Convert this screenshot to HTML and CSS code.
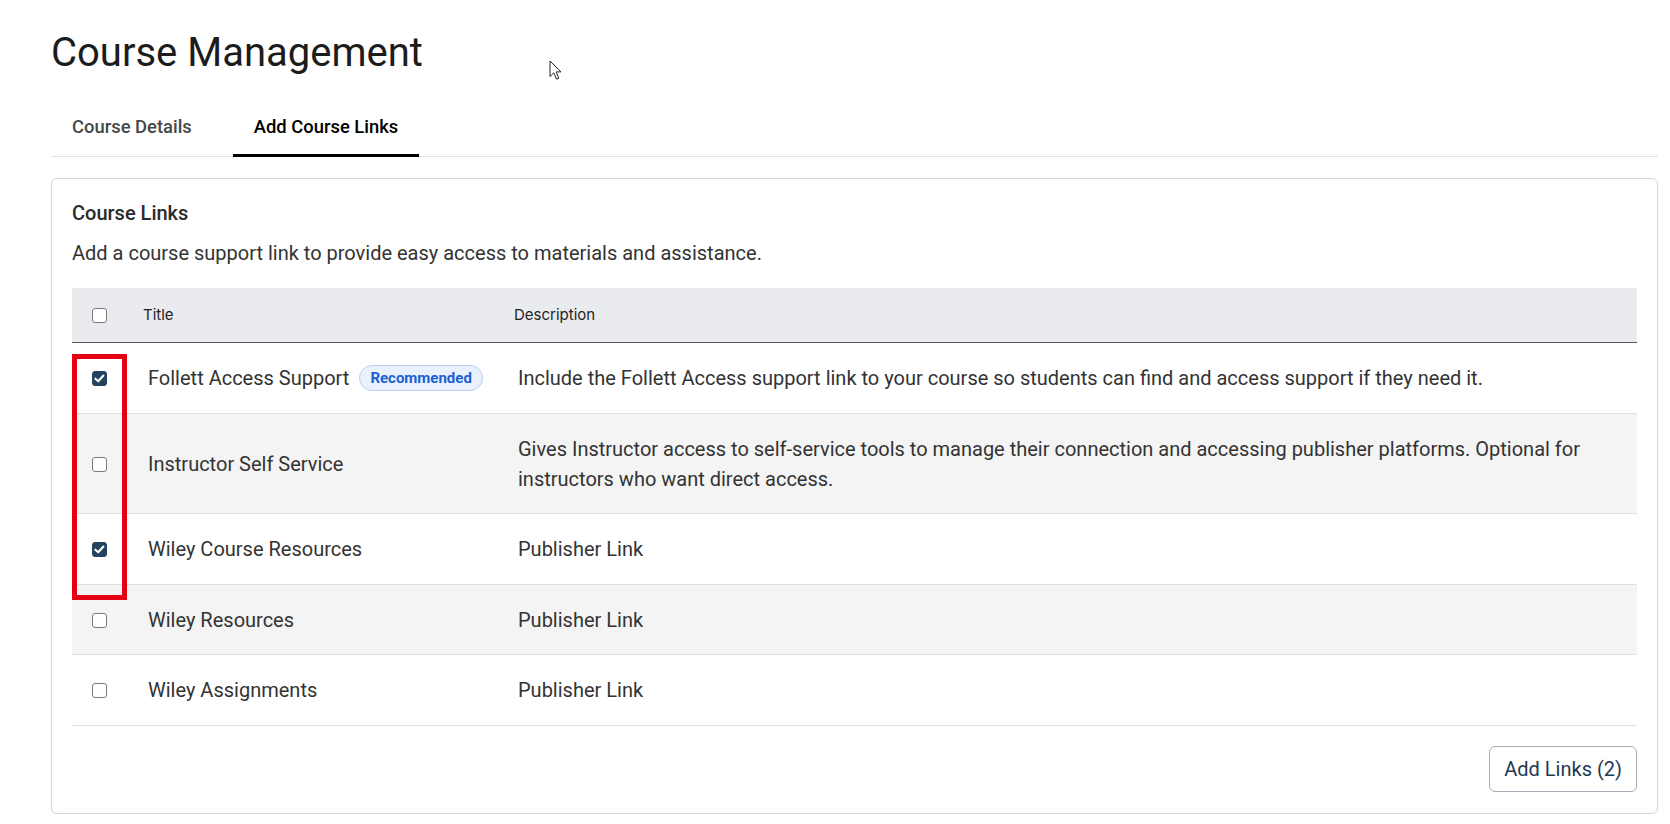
FILE: index.html
```html
<!DOCTYPE html>
<html lang="en">
<head>
<meta charset="utf-8">
<title>Course Management</title>
<link rel="stylesheet" href="styles.css">
</head>
<body>
<div class="page">
  <h1 class="page-title">Course Management</h1>
  <nav class="tabs">
    <div class="tab">Course Details</div>
    <div class="tab active">Add Course Links</div>
  </nav>
  <section class="card">
    <h2 class="card-title">Course Links</h2>
    <p class="card-desc">Add a course support link to provide easy access to materials and assistance.</p>
    <div class="table-wrap">
      <table class="links">
        <thead>
          <tr>
            <th class="col-check"><span class="cb"></span></th>
            <th class="col-title">Title</th>
            <th class="col-desc">Description</th>
          </tr>
        </thead>
        <tbody>
          <tr>
            <td class="col-check"><span class="cb checked"><svg viewBox="0 0 16 16" width="15" height="15"><path d="M3.6 8.2 L6.6 11 L12.2 4.8" fill="none" stroke="#fff" stroke-width="2.2" stroke-linecap="round" stroke-linejoin="round"/></svg></span></td>
            <td class="title-cell">Follett Access Support <span class="badge">Recommended</span></td>
            <td>Include the Follett Access support link to your course so students can find and access support if they need it.</td>
          </tr>
          <tr class="alt">
            <td class="col-check"><span class="cb"></span></td>
            <td class="title-cell">Instructor Self Service</td>
            <td>Gives Instructor access to self-service tools to manage their connection and accessing publisher platforms. Optional for instructors who want direct access.</td>
          </tr>
          <tr>
            <td class="col-check"><span class="cb checked"><svg viewBox="0 0 16 16" width="15" height="15"><path d="M3.6 8.2 L6.6 11 L12.2 4.8" fill="none" stroke="#fff" stroke-width="2.2" stroke-linecap="round" stroke-linejoin="round"/></svg></span></td>
            <td class="title-cell">Wiley Course Resources</td>
            <td>Publisher Link</td>
          </tr>
          <tr class="alt">
            <td class="col-check"><span class="cb"></span></td>
            <td class="title-cell">Wiley Resources</td>
            <td>Publisher Link</td>
          </tr>
          <tr>
            <td class="col-check"><span class="cb"></span></td>
            <td class="title-cell">Wiley Assignments</td>
            <td>Publisher Link</td>
          </tr>
        </tbody>
      </table>
      <div class="annotation"></div>
    </div>
    <div class="actions">
      <button class="btn" type="button">Add Links (2)</button>
    </div>
  </section>
  <svg class="cursor" viewBox="0 0 13 21" width="13" height="21"><path d="M1 1 L1 16.5 L4.8 12.8 L7.6 19.2 L9.8 18.2 L7.1 11.9 L12 11.9 Z" fill="#fff" stroke="#222" stroke-width="1" stroke-linejoin="round"/></svg>
</div>
</body>
</html>
```
FILE: styles.css
```css
* { box-sizing: border-box; }

body {
  margin: 0;
  background: #fff;
  font-family: Roboto, "Liberation Sans", Arial, sans-serif;
  color: #333;
}

.page {
  position: relative;
  padding: 29px 12px 0 51px;
}

.page-title {
  margin: 0;
  font-size: 40px;
  line-height: 48px;
  font-weight: 400;
  color: #1c1c1c;
}

.tabs {
  display: flex;
  gap: 20px;
  margin-top: 26px;
  border-bottom: 1px solid #e3e3e3;
}

.tab {
  padding: 12px 21px 15px;
  font-size: 18.4px;
  line-height: 24px;
  font-weight: 500;
  color: #474747;
  border-bottom: 3px solid transparent;
  margin-bottom: -1px;
}

.tab.active {
  color: #000;
  border-bottom-color: #000;
}

.card {
  margin-top: 21px;
  border: 1px solid #d6d6d6;
  border-radius: 6px;
  padding: 20px 20px 21px;
  box-shadow: 0 1px 3px rgba(0, 0, 0, 0.06);
}

.card-title {
  margin: 0;
  font-size: 20px;
  line-height: 28px;
  font-weight: 500;
  color: #2a2a2a;
}

.card-desc {
  margin: 11px 0 20px;
  font-size: 20px;
  line-height: 30px;
  color: #333;
}

.table-wrap {
  position: relative;
}

.links {
  width: 100%;
  border-collapse: collapse;
  table-layout: fixed;
}

.links th {
  background: #eaebee;
  text-align: left;
  font-family: Inter, "Noto Sans", sans-serif;
  font-weight: 400;
  font-size: 15px;
  line-height: 30px;
  color: #1f1f1f;
  padding: 12.15px 16px;
  border-bottom: 1px solid #55585c;
}

.links td {
  font-size: 20px;
  line-height: 30px;
  color: #333;
  padding: 19.75px 20px;
  vertical-align: middle;
  border-bottom: 1px solid #e0e0e0;
}

.links td.title-cell {
  white-space: nowrap;
  padding-left: 21px;
  padding-right: 10px;
}

.links tr.alt td {
  background: #f4f4f4;
}

.links .col-check {
  width: 55px;
  padding-left: 0;
  padding-right: 0;
  text-align: center;
}

.links .col-title {
  width: 371px;
}

.cb {
  display: inline-block;
  width: 15px;
  height: 15px;
  border: 1px solid #7a7a7a;
  border-radius: 3px;
  background: #fff;
  vertical-align: middle;
  position: relative;
  top: -1px;
}

.cb svg {
  display: block;
  margin: -1px;
}

.cb.checked {
  background: #23435e;
  border-color: #23435e;
}

.badge {
  display: inline-block;
  margin-left: 5px;
  padding: 0 10px;
  height: 26px;
  line-height: 24px;
  border: 1px solid #b9cff3;
  border-radius: 13px;
  background: #e9f1fd;
  color: #1b5fd7;
  font-size: 15px;
  font-weight: 700;
  vertical-align: middle;
  position: relative;
  top: -2px;
}

.annotation {
  position: absolute;
  left: 0;
  top: 66px;
  width: 55px;
  height: 246px;
  border: 5px solid #e50012;
  pointer-events: none;
}

.actions {
  display: flex;
  justify-content: flex-end;
  margin-top: 20px;
}

.btn {
  height: 46px;
  padding: 0 14px;
  border: 1px solid #a3acb6;
  border-radius: 6px;
  background: #fff;
  font-family: Roboto, "Liberation Sans", Arial, sans-serif;
  font-size: 20px;
  color: #1f3a52;
}

.cursor {
  position: absolute;
  left: 549px;
  top: 60px;
}
```
